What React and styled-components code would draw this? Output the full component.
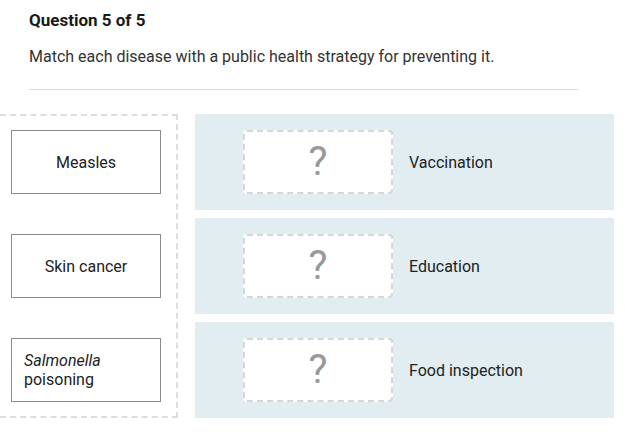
import React from 'react';
import styled, { createGlobalStyle } from 'styled-components';

const GlobalStyle = createGlobalStyle`
  html, body {
    margin: 0;
    padding: 0;
    background: #ffffff;
  }
  body {
    font-family: Roboto, "Liberation Sans", Arial, sans-serif;
    color: #212121;
  }
  * {
    box-sizing: border-box;
  }
`;

const Page = styled.div`
  width: 625px;
  padding-top: 10px;
  overflow: hidden;
`;

const Header = styled.div`
  padding: 0 47px 0 29px;
`;

const Title = styled.h1`
  margin: 0;
  font-size: 17px;
  line-height: 20px;
  font-weight: 700;
  color: #1a1a1a;
`;

const Prompt = styled.p`
  margin: 17px 0 0;
  font-size: 16px;
  line-height: 20px;
  color: #333333;
`;

const Divider = styled.hr`
  margin: 22px 0 0;
  border: none;
  border-top: 1px solid #dddddd;
  height: 0;
`;

const MatchArea = styled.div`
  display: grid;
  grid-template-columns: 178px 1fr;
  column-gap: 17px;
  margin-top: 24px;
  padding-right: 11px;
`;

const Pool = styled.div`
  display: flex;
  flex-direction: column;
  gap: 40px;
  padding: 14px 0 14px 11px;
  border: 2px dashed #dddddd;
  border-left: none;
`;

const Card = styled.div`
  width: 150px;
  height: 64px;
  padding: 0 12px;
  display: flex;
  align-items: center;
  justify-content: center;
  border: 1px solid #8a8a8a;
  background: #ffffff;
  font-size: 16px;
  line-height: 19px;
  color: #222222;
`;

const CardText = styled.span`
  text-align: left;
`;

const Targets = styled.div`
  display: flex;
  flex-direction: column;
  gap: 8px;
`;

const Row = styled.div`
  height: 96px;
  display: flex;
  align-items: center;
  gap: 16px;
  padding-left: 48px;
  background: #e1edf1;
`;

const DropBox = styled.div`
  width: 150px;
  height: 64px;
  display: flex;
  align-items: center;
  justify-content: center;
  border: 2px dashed #d6d6d6;
  border-radius: 4px;
  background: #ffffff;
  font-size: 40px;
  line-height: 1;
  font-weight: 400;
  color: #999999;
`;

const Label = styled.span`
  font-size: 16px;
  color: #222222;
`;

const diseases = [
  { id: 'measles', content: 'Measles' },
  { id: 'skin', content: 'Skin cancer' },
  {
    id: 'salmonella',
    content: (
      <>
        <em>Salmonella</em> poisoning
      </>
    ),
  },
];

const strategies = ['Vaccination', 'Education', 'Food inspection'];

const App = () => (
  <>
    <GlobalStyle />
    <Page>
      <Header>
        <Title>Question 5 of 5</Title>
        <Prompt>Match each disease with a public health strategy for preventing it.</Prompt>
        <Divider />
      </Header>
      <MatchArea>
        <Pool>
          {diseases.map((d) => (
            <Card key={d.id}>
              <CardText>{d.content}</CardText>
            </Card>
          ))}
        </Pool>
        <Targets>
          {strategies.map((s) => (
            <Row key={s}>
              <DropBox>?</DropBox>
              <Label>{s}</Label>
            </Row>
          ))}
        </Targets>
      </MatchArea>
    </Page>
  </>
);

export default App;
